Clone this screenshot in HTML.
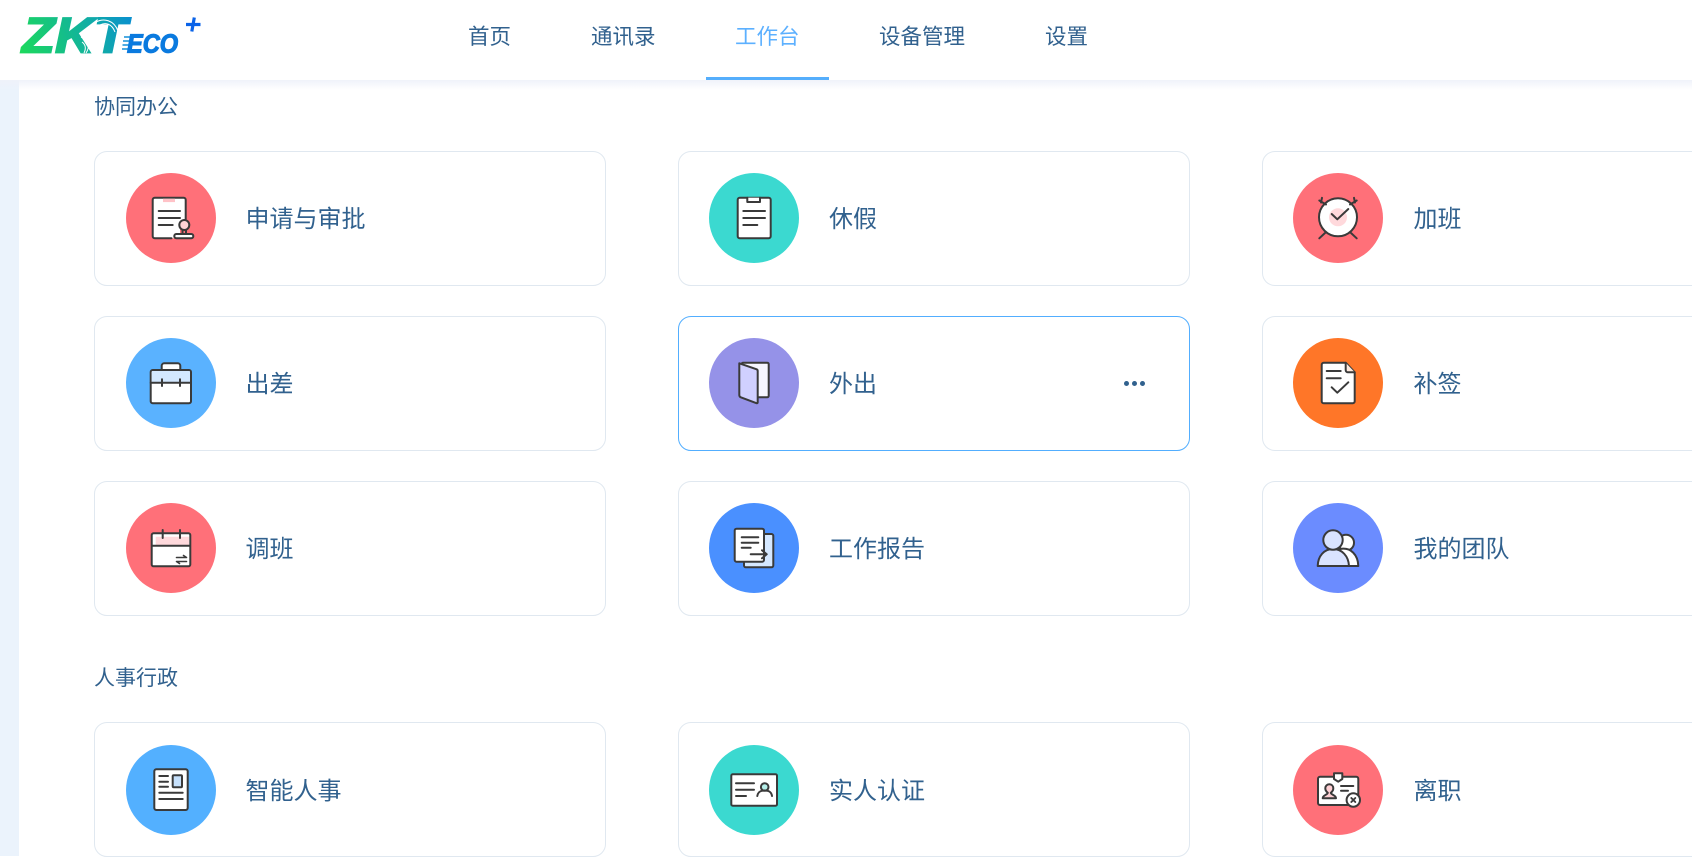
<!DOCTYPE html>
<html lang="zh-CN">
<head>
<meta charset="utf-8">
<title>工作台</title>
<style>
html,body{margin:0;padding:0;background:#fff}
body{position:relative;width:1692px;height:856px;overflow:hidden;font-family:"Liberation Sans","Noto Sans CJK SC",sans-serif;color:#31618e}
.side{position:absolute;left:0;top:80px;width:19px;height:776px;background:#ebf3fc}
.shadow{position:absolute;left:0;top:80px;width:1692px;height:10px;background:linear-gradient(#eff2fa,rgba(255,255,255,0))}
.head{position:absolute;left:0;top:0;width:1692px;height:80px;background:#fff}
.logo{position:absolute;left:0;top:0}
.nav{position:absolute;top:21px;font-size:21.5px;line-height:32px;white-space:nowrap;color:#31618e}
.nav.on{color:#5cb0ff}
.bar{position:absolute;left:706px;top:77px;width:123px;height:3px;background:#55aefc}
.sec{position:absolute;left:94px;font-size:21px;line-height:30px;white-space:nowrap}
.card{position:absolute;box-sizing:border-box;width:512px;height:135px;background:#fff;border:1px solid #e0e8f0;border-radius:13px}
.card.hl{border-color:#52aeff}
.card svg{position:absolute;top:21px;width:90px;height:90px}
.card span{position:absolute;top:50px;font-size:24px;line-height:36px;white-space:nowrap}
.a svg{left:31px}.a span{left:150.5px}
.b svg{left:30px}.b span{left:150px}
.c svg{left:30px}.c span{left:150.500px}
.r4 svg{top:22px}.r4 span{top:51px}
.i{fill:none;stroke:#3a3a3a;stroke-width:2;stroke-linecap:round;stroke-linejoin:round}
.dots{position:absolute;left:445px;top:64px}
.dots i{position:absolute;top:0;width:5px;height:5px;border-radius:50%;background:#31618e}
</style>
</head>
<body>
<div class="side"></div>
<div class="shadow"></div>
<div class="head"></div>
<svg class="logo" width="220" height="70" viewBox="0 0 220 70">
  <defs>
    <linearGradient id="lg" gradientUnits="userSpaceOnUse" x1="20" y1="53" x2="132" y2="17">
      <stop offset="0" stop-color="#1cd95c"/><stop offset=".55" stop-color="#12b49a"/><stop offset="1" stop-color="#0a8fd0"/>
    </linearGradient>
  </defs>
  <text x="22" y="52.500" font-family="Liberation Sans" font-weight="700" font-style="italic" font-size="50" textLength="105" lengthAdjust="spacingAndGlyphs" fill="url(#lg)" stroke="url(#lg)" stroke-width="1.800">ZKT</text>
  <g fill="none" stroke="#fff" stroke-width="1">
    <path d="M96 22C104 18 114 20 118 31"/><path d="M100 25C106 22 112 24 115 32"/>
    <path d="M81 37C89 41 90 47 86 53"/><path d="M82 42C86 45 86 49 84 53"/>
  </g>
  <rect x="120" y="32" width="60" height="22" fill="#fff"/>
  <path d="M124 37H130M123 41H129M122.500 45H128.500M122 49H128" fill="none" stroke="#1591d8" stroke-width="1.500"/>
  <text x="127" y="52.500" font-family="Liberation Sans" font-weight="700" font-style="italic" font-size="26" textLength="51" lengthAdjust="spacingAndGlyphs" fill="#0a7adf" stroke="#0a7adf" stroke-width="1.200">ECO</text>
  <path d="M186 24.500H200.500M194.300 17.500L191.800 31.500" fill="none" stroke="#0a63e8" stroke-width="3.200"/>
</svg>

<div class="nav" style="left:468px">首页</div>
<div class="nav" style="left:591px">通讯录</div>
<div class="nav on" style="left:735px">工作台</div>
<div class="nav" style="left:879px">设备管理</div>
<div class="nav" style="left:1045px">设置</div>
<div class="bar"></div>

<div class="sec" style="top:93px">协同办公</div>

<div class="card a" style="left:94px;top:151px">
  <svg viewBox="0 0 90 90"><circle cx="45" cy="45" r="45" fill="#ff7079"/>
    <g class="i"><path d="M48 65.300H28.700a2 2 0 0 1-2-2V26.700a2 2 0 0 1 2-2H57.700a2 2 0 0 1 2 2V46L54 50V60L48 61Z" fill="#fff" stroke="none"/>
    <path d="M45.500 65.300H28.700a2 2 0 0 1-2-2V26.700a2 2 0 0 1 2-2H57.700a2 2 0 0 1 2 2V46"/>
    <rect x="37" y="25.700" width="12" height="3.400" fill="#ffc2c7" stroke="none"/>
    <path d="M32.700 38H54M32.700 45H54M32.700 52H46.700"/>
    <circle cx="58.300" cy="52" r="5" fill="#ffd3d6"/><path d="M56.500 57V61M60 57V61" />
    <rect x="48.300" y="61" width="19" height="4.300" rx="2" fill="#fff"/></g></svg>
  <span>申请与审批</span>
</div>
<div class="card b" style="left:678px;top:151px">
  <svg viewBox="0 0 90 90"><circle cx="45" cy="45" r="45" fill="#3bd9d0"/>
    <g class="i"><rect x="28.700" y="24.700" width="33" height="40.600" rx="2" fill="#fff"/>
    <path d="M38.300 24.700V29H51V24.700" fill="#fff"/>
    <path d="M34.300 38H56M34.300 45H56M34.300 52H48.300"/></g></svg>
  <span>休假</span>
</div>
<div class="card c" style="left:1262px;top:151px">
  <svg viewBox="0 0 90 90"><circle cx="45" cy="45" r="45" fill="#ff7079"/>
    <g class="i"><circle cx="45" cy="44.300" r="19" fill="#fff"/>
    <circle cx="45" cy="44.300" r="9" fill="#ffd9dc" stroke="none"/>
    <path d="M38.700 41L44.300 46.300L55.300 36"/>
    <path d="M26.300 65.300L32 60M63.700 65.300L58 60"/>
    <path d="M26.300 27.500L33 31.500M29 24.800L28 29.500M63.700 27.500L57 31.500M61 24.800L62 29.500"/></g></svg>
  <span>加班</span>
</div>

<div class="card a" style="left:94px;top:316px">
  <svg viewBox="0 0 90 90"><circle cx="45" cy="45" r="45" fill="#5ab2ff"/>
    <g class="i"><rect x="35.700" y="25.300" width="18.600" height="9" rx="2.500" fill="#fff"/>
    <rect x="24.700" y="32" width="40.300" height="33.300" rx="2" fill="#fff"/>
    <path d="M25.700 44.700V34a1 1 0 0 1 1-1H63a1 1 0 0 1 1 1V44.700Z" fill="#d3e8ff" stroke="none"/>
    <path d="M24.700 44.700H65M36 41.300V48M54 41.300V48"/></g></svg>
  <span>出差</span>
</div>
<div class="card b hl" style="left:678px;top:316px">
  <svg viewBox="0 0 90 90"><circle cx="45" cy="45" r="45" fill="#9592e8"/>
    <g class="i"><rect x="32.700" y="24.700" width="27" height="34.600" rx="1.500" fill="#f6f6ff"/>
    <path d="M30.300 25.300L47.700 31.300Q48.700 31.800 48.700 33V64.300Q48.700 65.500 47.500 65.200L31.800 59.300Q30.300 58.700 30.300 57Z" fill="#d0d0ff"/></g></svg>
  <span>外出</span>
  <div class="dots"><i style="left:0"></i><i style="left:8px"></i><i style="left:16px"></i></div>
</div>
<div class="card c" style="left:1262px;top:316px">
  <svg viewBox="0 0 90 90"><circle cx="45" cy="45" r="45" fill="#ff7628"/>
    <g class="i"><path d="M52.700 24.700H30.700a2 2 0 0 0-2 2V63.300a2 2 0 0 0 2 2H59.700a2 2 0 0 0 2-2V34.300Z" fill="#fff"/>
    <path d="M52.700 24.700V32a2.300 2.300 0 0 0 2.300 2.300H61.700" fill="#ffe9dc"/>
    <path d="M33.700 33H47.700M33.700 40.300H47.700M38.700 49.300L44.300 54.700L55.300 44.300"/></g></svg>
  <span>补签</span>
</div>

<div class="card a" style="left:94px;top:481px">
  <svg viewBox="0 0 90 90"><circle cx="45" cy="45" r="45" fill="#ff7079"/>
    <g class="i"><rect x="25.700" y="30.300" width="38.600" height="33" rx="1.800" fill="#fff"/>
    <path d="M29.700 33.700H63V42H29.700Z" fill="#ffd9dc" stroke="none"/>
    <path d="M26 42.700H64M36.700 27V35M54 27V35"/>
    <path d="M50.500 54.500H60.500L57.500 52.500M60.500 58.500H50.500L53.500 60.500" stroke-width="1.600"/></g></svg>
  <span>调班</span>
</div>
<div class="card b" style="left:678px;top:481px">
  <svg viewBox="0 0 90 90"><circle cx="45" cy="45" r="45" fill="#4a90ff"/>
    <g class="i"><rect x="35" y="31" width="29.300" height="33.300" rx="1.800" fill="#d5e8ff"/>
    <rect x="25.700" y="25.700" width="29.300" height="33" rx="1.800" fill="#fff"/>
    <path d="M32.700 34.300H49.300M32.700 39.700H49.300M32.700 44.700H41.700"/>
    <path d="M41.700 51.300H57.700M53 47.300L57.700 51.300L53 55.300"/></g></svg>
  <span>工作报告</span>
</div>
<div class="card c" style="left:1262px;top:481px">
  <svg viewBox="0 0 90 90"><circle cx="45" cy="45" r="45" fill="#6b8cff"/>
    <g class="i"><circle cx="53" cy="39.700" r="8" fill="#fff"/>
    <path d="M47 46C58 44 65 52 65.300 63H52Z" fill="#fff"/>
    <path d="M24.700 63C25 53 31 46 40 46C49 46 55.500 53 56 63Z" fill="#d9e3ff"/>
    <circle cx="40" cy="37" r="9.700" fill="#d9e3ff"/></g></svg>
  <span>我的团队</span>
</div>

<div class="sec" style="top:664px">人事行政</div>

<div class="card a r4" style="left:94px;top:722px">
  <svg viewBox="0 0 90 90"><circle cx="45" cy="45" r="45" fill="#53b0ff"/>
    <g class="i"><rect x="28.300" y="24.300" width="33.400" height="40.700" rx="2" fill="#fff"/>
    <rect x="46.700" y="30.300" width="9.300" height="12" rx="1" fill="#c6e0fb"/>
    <path d="M33.300 31H42M33.300 36.700H42M33.300 41.700H42M33.300 47.700H56.700M33.300 54H56.700"/></g></svg>
  <span>智能人事</span>
</div>
<div class="card b r4" style="left:678px;top:722px">
  <svg viewBox="0 0 90 90"><circle cx="45" cy="45" r="45" fill="#3bd9d0"/>
    <g class="i"><rect x="22.300" y="29.300" width="45.700" height="31.400" rx="1.500" fill="#fff"/>
    <path d="M27 38.300H45M27 44.700H45M27 51H37"/>
    <circle cx="55.700" cy="42" r="3.800" fill="#b5efe9"/>
    <path d="M48.300 51C49 46.500 52 45.500 55.700 45.500C59.500 45.500 62.300 46.500 63 51"/></g></svg>
  <span>实人认证</span>
</div>
<div class="card c r4" style="left:1262px;top:722px">
  <svg viewBox="0 0 90 90"><circle cx="45" cy="45" r="45" fill="#ff7079"/>
    <g class="i"><rect x="25" y="31.700" width="40.300" height="28.300" rx="2" fill="#fff"/>
    <path d="M41 28.300H49.300V34L45.200 36.700L41 34Z" fill="#fff"/>
    <path d="M29.700 53.300C29.700 50 34.500 50 34.800 47.800C33 46.500 32.300 44.800 32.300 43.300C32.300 41 34 39.300 36.300 39.300C38.700 39.300 40.300 41 40.300 43.300C40.300 44.800 39.600 46.500 37.800 47.800C38.100 50 43 50 43 53.300Z" fill="#ffd0d4"/>
    <path d="M48 41H60.300M48 45.700H55"/>
    <circle cx="60.300" cy="55" r="6.700" fill="#fff"/>
    <path d="M58.300 53L62.300 57M62.300 53L58.300 57" stroke-width="1.900"/></g></svg>
  <span>离职</span>
</div>
</body>
</html>
